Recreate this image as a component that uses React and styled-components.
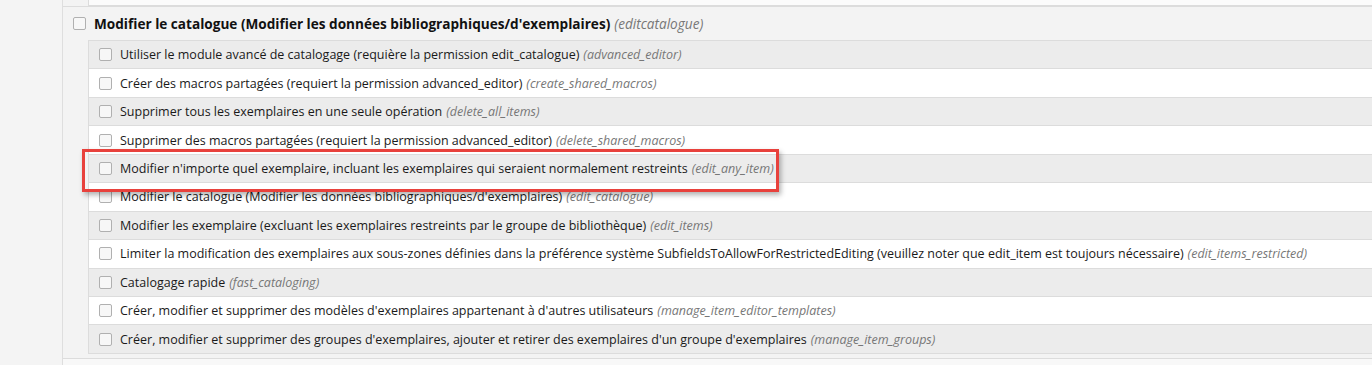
import React from 'react';
import styled, { createGlobalStyle } from 'styled-components';

const GlobalStyle = createGlobalStyle`
  html, body {
    margin: 0;
    padding: 0;
    background: #f4f4f4;
  }
  body {
    font-family: "Open Sans", "Noto Sans", sans-serif;
    color: #1a1a1a;
    overflow: hidden;
  }
`;

const permissions = [
  { label: 'Utiliser le module avancé de catalogage (requière la permission edit_catalogue)', code: 'advanced_editor' },
  { label: 'Créer des macros partagées (requiert la permission advanced_editor)', code: 'create_shared_macros' },
  { label: 'Supprimer tous les exemplaires en une seule opération', code: 'delete_all_items' },
  { label: 'Supprimer des macros partagées (requiert la permission advanced_editor)', code: 'delete_shared_macros' },
  { label: "Modifier n'importe quel exemplaire, incluant les exemplaires qui seraient normalement restreints", code: 'edit_any_item' },
  { label: "Modifier le catalogue (Modifier les données bibliographiques/d'exemplaires)", code: 'edit_catalogue' },
  { label: 'Modifier les exemplaire (excluant les exemplaires restreints par le groupe de bibliothèque)', code: 'edit_items' },
  { label: 'Limiter la modification des exemplaires aux sous-zones définies dans la préférence système SubfieldsToAllowForRestrictedEditing (veuillez noter que edit_item est toujours nécessaire)', code: 'edit_items_restricted' },
  { label: 'Catalogage rapide', code: 'fast_cataloging' },
  { label: "Créer, modifier et supprimer des modèles d'exemplaires appartenant à d'autres utilisateurs", code: 'manage_item_editor_templates' },
  { label: "Créer, modifier et supprimer des groupes d'exemplaires, ajouter et retirer des exemplaires d'un groupe d'exemplaires", code: 'manage_item_groups' },
];

export default function App() {
  return (
    <>
      <GlobalStyle />
      <Content>
        <PermList>
          <TailItem>
            <TailRow />
          </TailItem>
          <PermItem>
            <HeaderLabel>
              <Checkbox type="checkbox" />
              <strong>Modifier le catalogue (Modifier les données bibliographiques/d'exemplaires)</strong>
              <Code>(editcatalogue)</Code>
            </HeaderLabel>
            <SubList>
              {permissions.map((p, i) => (
                <SubRow key={p.code} odd={i % 2 === 0}>
                  <Checkbox type="checkbox" />
                  <span>{p.label}</span>
                  <Code>({p.code})</Code>
                </SubRow>
              ))}
            </SubList>
          </PermItem>
          <PermItem last />
        </PermList>
        <Highlight />
      </Content>
    </>
  );
}

const Content = styled.div`
  position: relative;
  margin-left: 62px;
  border-left: 1px solid #dedede;
  background: #f3f3f3;
  min-height: 365px;
`;

const PermList = styled.ul`
  list-style: none;
  margin: 0;
  padding: 0;
`;

const TailItem = styled.li`
  padding-left: 25px;
`;

const TailRow = styled.div`
  height: 5px;
  background: #fbfbfb;
  border-left: 1px solid #dcdcdc;
  border-bottom: 1px solid #dcdcdc;
`;

const PermItem = styled.li`
  background: ${(p) => (p.last ? '#f8f8f8' : '#f3f3f3')};
  border-top: 1px solid #dcdcdc;
  padding: 0 0 4px 10px;
  min-height: ${(p) => (p.last ? '20px' : '0')};
`;

const HeaderLabel = styled.div`
  display: flex;
  align-items: center;
  height: 33px;
  font-size: 13.6px;
  white-space: nowrap;

  strong {
    font-weight: 700;
    color: #111;
  }
`;

const Checkbox = styled.input`
  appearance: none;
  -webkit-appearance: none;
  width: 13px;
  height: 13px;
  margin: 0 8px 0 0;
  flex: none;
  box-sizing: border-box;
  border: 1px solid #b0b0b0;
  border-radius: 2px;
  background: #f7f7f7;
`;

const SubList = styled.ul`
  list-style: none;
  margin: 0 0 0 15px;
  padding: 0;
  border-top: 1px solid #dcdcdc;
  border-left: 1px solid #dcdcdc;
`;

const SubRow = styled.li`
  display: flex;
  align-items: center;
  box-sizing: border-box;
  height: 28.45px;
  padding-left: 10px;
  border-bottom: 1px solid #dcdcdc;
  background: ${(p) => (p.odd ? '#ececec' : '#ffffff')};
  font-size: 12.5px;
  white-space: nowrap;
`;

const Code = styled.i`
  margin-left: 4px;
  color: #777;
  font-style: italic;
`;

const Highlight = styled.div`
  position: absolute;
  left: 19px;
  top: 149px;
  width: 697px;
  height: 43px;
  box-sizing: border-box;
  border: 3px solid #e8413c;
  box-shadow: 2px 3px 5px rgba(0, 0, 0, 0.3);
  pointer-events: none;
`;
